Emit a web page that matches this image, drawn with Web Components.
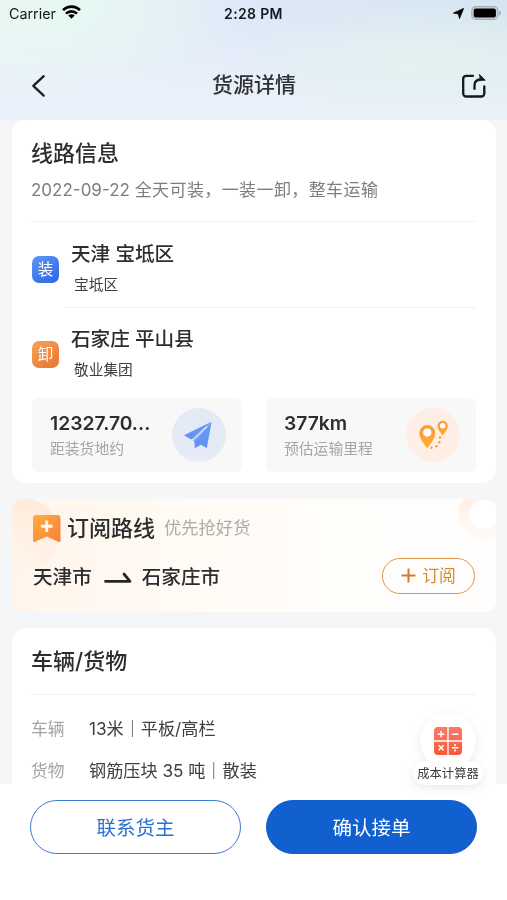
<!DOCTYPE html>
<html lang="zh-CN">
<head>
<meta charset="utf-8">
<title>货源详情</title>
<style>
html,body{margin:0;padding:0;height:900px;overflow:hidden}
body{font-family:Inter,"Noto Sans CJK SC",sans-serif;color:#2f3133;background:#f4f6f8}
</style>
</head>
<body>
<cargo-page></cargo-page>
<script>
const define = (name, html) => {
  const t = document.createElement('template');
  t.innerHTML = html;
  customElements.define(name, class extends HTMLElement {
    constructor() {
      super();
      this.attachShadow({mode: 'open'}).append(t.content.cloneNode(true));
    }
  });
};

define('status-bar', `<style>
:host{display:grid;grid-template-columns:1fr auto 1fr;align-items:center;height:28px;padding:0 6px 1px 9px;font-size:14.300px;color:#15181c;box-sizing:border-box}
.l,.r{display:flex;align-items:center}
.l{gap:6px}.r{justify-content:flex-end;gap:7px}
.t{font-weight:600;letter-spacing:.350px;font-size:14px;margin-right:3px}
svg{display:block}
.l svg{margin-top:-3px}
.r{margin-top:-1px}
</style>
<div class="l"><span>Carrier</span>
<svg width="19" height="14" viewBox="0 0 19 14" fill="none" stroke="#000" stroke-width="2.600"><path d="M1 5.100a12.200 12.200 0 0 1 17 0"/><path d="M4 8.600a7.800 7.800 0 0 1 11 0"/><path d="M9.500 13.700 6.300 10.600a4.600 4.600 0 0 1 6.400 0z" fill="#000" stroke="none"/></svg></div>
<span class="t">2:28 PM</span>
<div class="r"><svg width="11" height="11" viewBox="0 0 11 11"><path d="M10.600.4 6.500 10.600 5.400 6 .4 5z" fill="#000" stroke="#000" stroke-width=".8" stroke-linejoin="round"/></svg>
<svg width="30" height="14" viewBox="0 0 30 14"><rect x=".8" y=".7" width="26" height="12.600" rx="3.800" fill="#ccd3da" stroke="#a5acb3" stroke-width="1.200"/><rect x="2.700" y="2.500" width="22.200" height="9" rx="2" fill="#000"/><path d="M28 4.500q2 .7 2 2.500t-2 2.500z" fill="#a5acb3"/></svg></div>`);

define('nav-bar', `<style>
:host{display:flex;align-items:center;justify-content:space-between;height:92px;padding:24px 20px 0 31px;box-sizing:border-box}
.t{font-size:21px;line-height:30px;font-weight:500;margin:0 0 3px 0}
svg{display:block;margin-bottom:1px}
</style>
<svg width="16" height="24" viewBox="0 0 16 24" fill="none" stroke="#1f2225" stroke-width="2.300" stroke-linecap="round" stroke-linejoin="round"><path d="M12.700 2.200 2.300 11.900 12.700 21.700"/></svg>
<span class="t"><slot></slot></span>
<svg width="26" height="24" viewBox="0 0 26 24" fill="none" stroke="#15191b" stroke-width="2.300" stroke-linecap="round" stroke-linejoin="round"><path d="M12 1.800H5.200A3 3 0 0 0 2.200 4.800v14.700a3 3 0 0 0 3 3H20.300a3 3 0 0 0 3-3V12.300"/><path d="M13.500 15.800V11.300q0-5.500 6-5.800h1.500" stroke-linecap="butt"/><path d="M18.600.6 24.200 6.300H19.600z" fill="#15191b" stroke-width=".8"/></svg>`);

define('info-card', `<style>
:host{display:block;box-sizing:border-box;margin:0 11px 0 12px;padding:0 19px 0 19px;background:#fff;border-radius:14px;overflow:hidden}
</style><slot></slot>`);

define('card-title', `<style>
:host{display:block;font-size:22px;line-height:32px;font-weight:500;padding:17px 0 0;color:#2b2d2f}
</style><slot></slot>`);

define('route-stop', `<style>
:host{display:flex;align-items:center;gap:12px;height:85px;box-sizing:border-box}
.i{width:27px;height:27px;border-radius:7px;margin:9px 0 0 1px;color:#fff;font-size:15.500px;line-height:27px;text-align:center;background:var(--c)}
.x{display:flex;flex-direction:column;padding-top:7px}
.n{font-size:19.600px;line-height:30px;font-weight:500;color:#2b2d2f}
.s{font-size:14.700px;line-height:24px;margin:4px 0 0 3px;color:#3c3e40}
</style><div class="i"><slot name="tag"></slot></div>
<div class="x"><span class="n"><slot></slot></span><span class="s"><slot name="sub"></slot></span></div>`);

define('stat-tile', `<style>
:host{display:flex;justify-content:space-between;align-items:center;width:210px;height:74px;box-sizing:border-box;padding:0 16px 0 18px;background:#f8f8f8;border-radius:6px}
.x{display:flex;flex-direction:column}
.n{font-size:19.300px;line-height:26px;font-weight:600;color:#2b2d2f}
.s{font-size:14.800px;line-height:22px;margin-top:2px;color:#a3a5a7;white-space:nowrap}
</style><div class="x"><span class="n"><slot></slot></span><span class="s"><slot name="label"></slot></span></div><slot name="icon"></slot>`);

define('plane-icon', `<style>:host,svg{display:block}</style>
<svg width="54" height="54" viewBox="0 0 54 54"><defs><linearGradient id="g" x1="0" y1="0" x2="0" y2="1"><stop offset="0" stop-color="#649af7"/><stop offset="1" stop-color="#6790f2"/></linearGradient><linearGradient id="b" x1="0" y1="0" x2="0" y2="1"><stop offset="0" stop-color="#e1eaf5"/><stop offset="1" stop-color="#e7ecf6"/></linearGradient></defs>
<circle cx="27" cy="27" r="27" fill="url(#b)"/><path d="M39.400 13.800 12 27.200 19.200 31.500z" fill="url(#g)"/><path d="M39.600 13.700 34.800 40.300 29 36.800 22.800 40.300 22.400 33.500z" fill="url(#g)"/><path d="M39.400 13.800 20 30.500 22 33.800z" fill="#6796f4"/><path d="M35 18.500 20.400 32.200" stroke="#e2eaf7" stroke-width="1.300"/></svg>`);

define('pins-icon', `<style>:host,svg{display:block}</style>
<svg width="54" height="54" viewBox="0 0 54 54"><defs><linearGradient id="g" x1="0" y1="0" x2="0" y2="1"><stop offset="0" stop-color="#f99b3c"/><stop offset="1" stop-color="#ffad28"/></linearGradient></defs>
<circle cx="27" cy="27" r="27" fill="#feeee6"/><circle cx="21.300" cy="25" r="5" fill="#fff"/><circle cx="36.700" cy="17.700" r="3.500" fill="#fff"/><path fill="url(#g)" fill-rule="evenodd" d="M21.300 40.200C18 36 13.300 30.300 13.300 25.100a8 8 0 0 1 16 0C29.300 30.300 24.600 36 21.300 40.200zM21.300 28.700a4.100 4.100 0 1 0 0-8.200 4.100 4.100 0 0 0 0 8.200z"/><path fill="url(#g)" fill-rule="evenodd" d="M36.700 27.400C34.500 24.600 31.500 21.500 31.500 18a5.200 5.200 0 0 1 10.400 0C41.900 21.500 38.900 24.600 36.700 27.400zM36.700 20.400a2.700 2.700 0 1 0 0-5.400 2.700 2.700 0 0 0 0 5.400z"/>
<g fill="#f79a4a"><circle cx="25.500" cy="39.700" r="1.200"/><circle cx="30.500" cy="38.200" r="1.200"/><circle cx="33.300" cy="34.200" r="1.200"/><circle cx="34" cy="29.500" r="1.200"/></g></svg>`);

define('subscribe-card', `<style>
:host{display:block;position:relative;overflow:hidden;box-sizing:border-box;height:113px;margin:16px 11px 16px 12px;border-radius:10px;padding:14px 21px 0 20px;background:linear-gradient(90deg,#fff5ec,#fffaf3 30%,#fffdfa 62%,#fffefd)}
.d{position:absolute;left:0;top:0}
.h,.r{position:relative;display:flex;align-items:center}
.h{height:30px}
.h b{font-size:22px;line-height:30px;font-weight:500;margin-left:6px;color:#2b2d2f}
.h span{font-size:17.300px;line-height:30px;margin-left:9px;color:#aeacaa}
.r{height:37px;margin-top:14px;font-size:19.600px;font-weight:500;color:#2b2d2f}
.r>span{margin-left:1px}
.a{margin:4px 9px 0 12px}
.a+span{margin-left:0!important}
.k{margin-left:auto;width:93px;height:36px;box-sizing:border-box;border:1.800px solid #dd9448;border-radius:18px;display:flex;align-items:center;justify-content:center;gap:6px;color:#d88931;font-size:16.800px;font-weight:400;background:#fffefd}
svg{display:block}
.k span{margin-top:-1px}
</style>
<svg class="d" width="484" height="113" viewBox="0 0 484 113"><defs><linearGradient id="o" x1="1" y1="0" x2=".3" y2="1"><stop offset="0" stop-color="#ffe6d2"/><stop offset="1" stop-color="#fff0e3" stop-opacity="0"/></linearGradient><linearGradient id="q" x1="0" y1="0" x2="0" y2="1"><stop offset="0" stop-color="#ffeee2"/><stop offset="1" stop-color="#fffaf6"/></linearGradient></defs><circle cx="10" cy="36" r="37" fill="url(#o)"/><circle cx="472" cy="15" r="20" fill="#fff" stroke="url(#q)" stroke-width="11"/></svg>
<div class="h"><svg width="29" height="28" viewBox="0 0 29 28"><defs><linearGradient id="m" x1="0" y1="0" x2="1" y2="1"><stop offset="0" stop-color="#ffac42"/><stop offset="1" stop-color="#fa8039"/></linearGradient></defs><path d="M4 1H25.500Q28.500 1 28.500 4V26.500Q28.500 28.800 26.300 27.700L14.800 22.500 3.300 27.700Q1 28.800 1 26.500V4Q1 1 4 1z" fill="url(#m)"/><path d="M14.700 6.500v11.600M8.900 12.300h11.600" stroke="#fff5e8" stroke-width="3"/></svg><b>订阅路线</b><span>优先抢好货</span></div>
<div class="r"><span>天津市</span><svg class="a" width="29" height="12" viewBox="0 0 29 12"><path d="M1.500 9.300H26L20 2" fill="none" stroke="#252525" stroke-width="2.800" stroke-linecap="round" stroke-linejoin="round"/></svg><span>石家庄市</span>
<div class="k"><svg width="15" height="15" viewBox="0 0 15 15"><path d="M7.500 .5v14M.5 7.500h14" stroke="#d27d20" stroke-width="2"/></svg><span>订阅</span></div></div>`);

define('spec-row', `<style>
:host{display:grid;grid-template-columns:58px 1fr;height:42px;line-height:42px;font-size:17.150px;color:#3d3f41;white-space:pre}
.k{color:#a3a5a7;font-size:16.800px}
</style><span class="k"><slot name="k"></slot></span><span><slot></slot></span>`);

define('cost-calculator', `<style>
:host{display:block;position:absolute;left:413px;top:713px;width:70px;height:72px;filter:drop-shadow(0 3px 5px rgba(100,130,170,.16))}
.c{width:56px;height:56px;border-radius:50%;background:#fff;margin-left:7px;display:grid;place-items:center}
.l{position:relative;margin-top:-8px;height:24px;border-radius:12px;background:#fff;font-size:12.300px;line-height:25px;text-align:center;color:#393b3d;white-space:nowrap}
svg{display:block}
</style><div class="c"><svg width="28" height="28" viewBox="0 0 28 28"><defs><linearGradient id="r" x1="0" y1="0" x2="0" y2="1"><stop offset="0" stop-color="#f97b68"/><stop offset="1" stop-color="#f9593b"/></linearGradient></defs><rect width="28" height="28" rx="4" fill="url(#r)"/><path d="M14 0v28M0 14h28" stroke="#fff" stroke-width="1.300"/><path d="M3.800 7.200h6.600M7.100 3.900v6.600M17.800 7.200h6.500M4.600 18.300l5 5M9.600 18.300l-5 5M17.800 20.800h6.500" stroke="#fff" stroke-width="1.500"/><circle cx="21" cy="18" r="1.100" fill="#fff"/><circle cx="21" cy="23.600" r="1.100" fill="#fff"/></svg></div><div class="l">成本计算器</div>`);

define('action-button', `<style>
:host{display:flex;align-items:center;justify-content:center;box-sizing:border-box;width:211px;height:54px;border-radius:27px;border:1.800px solid #3a7bd5;padding-bottom:2px;color:#2d6fd0;font-size:19.500px;background:#fff}
:host([primary]){background:#125fd0;border-color:#125fd0;color:#fff}
</style><slot></slot>`);

define('cargo-page', `<style>
:host{display:flex;flex-direction:column;position:relative;width:507px;height:900px;overflow:hidden;will-change:transform}
header{height:120px;flex:none;background:
radial-gradient(ellipse 170px 75px at 60px 10px,#e7f8f1,rgba(231,248,241,0)),
radial-gradient(ellipse 190px 65px at 430px 62px,#e3f2f0,rgba(227,242,240,0)),
linear-gradient(180deg,rgba(235,241,250,0) 15%,#ebf1fa 88%),
linear-gradient(90deg,#e9f5f7,#dee9f7 50%,#d5e4f1)}
.first{height:363px}
hr{border:0;height:1px;background:#f1f2f3;margin:0 1px 0 0}
.sub{font-size:17px;line-height:26px;color:#7c7e80;margin-top:8px;white-space:nowrap}
.sub i{font-style:normal;letter-spacing:.400px}
.tiles{display:flex;justify-content:space-between;margin:5px 1px 0 1px}
main{height:664px;flex:none;overflow:hidden}
footer{flex:1;background:#fff;display:flex;justify-content:space-between;align-items:flex-start;padding:16px 30px 0 30px}
</style>
<header><status-bar></status-bar><nav-bar>货源详情</nav-bar></header>
<main>
<info-card class="first"><card-title>线路信息</card-title><div class="sub">2022-09-22 <i>全天可装，一装一卸，整车运输</i></div><hr style="margin-top:18px">
<route-stop style="--c:linear-gradient(145deg,#5d97f5,#2f63e4)"><span slot="tag">装</span>天津 宝坻区<span slot="sub">宝坻区</span></route-stop><hr style="margin-left:33px">
<route-stop style="--c:linear-gradient(145deg,#f5a25c,#e97430);margin-top:-1px"><span slot="tag">卸</span>石家庄 平山县<span slot="sub">敬业集团</span></route-stop>
<div class="tiles" style="margin-top:6px"><stat-tile>12327.70...<span slot="label">距装货地约</span><plane-icon slot="icon"></plane-icon></stat-tile><stat-tile>377km<span slot="label">预估运输里程</span><pins-icon slot="icon"></pins-icon></stat-tile></div></info-card>
<subscribe-card></subscribe-card>
<info-card style="height:180px"><card-title>车辆/货物</card-title><hr style="margin-top:17px;margin-bottom:13px">
<spec-row><span slot="k">车辆</span>13米｜平板/高栏</spec-row><spec-row><span slot="k">货物</span>钢筋压块 35 吨｜散装</spec-row></info-card>
</main>
<footer><action-button>联系货主</action-button><action-button primary>确认接单</action-button></footer>
<cost-calculator></cost-calculator>`);
</script>
</body>
</html>
